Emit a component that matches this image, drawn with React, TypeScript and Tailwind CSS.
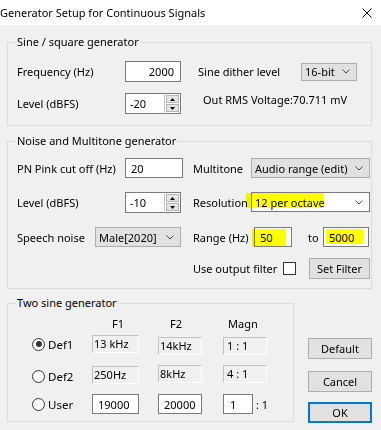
import React from "react";

function Chevron() {
  return (
    <svg width="8" height="5" viewBox="0 0 8 5" className="shrink-0">
      <polyline points="0.5,0.5 4,4 7.5,0.5" fill="none" stroke="#444" strokeWidth="1" />
    </svg>
  );
}

function Legend({ children }: { children: React.ReactNode }) {
  return (
    <span className="absolute left-[8px] top-[-9px] bg-[#f0f0f0] px-[1px] leading-[16px]">
      {children}
    </span>
  );
}

function Edit({ w, h = 21, text, right, pl = 4 }: { w: number; h?: number; text: string; right?: boolean; pl?: number }) {
  return (
    <div
      className={`border border-[#7a7a7a] bg-white flex items-center shrink-0 ${right ? "justify-end pr-[6px]" : ""}`}
      style={{ width: w, height: h, paddingLeft: right ? 0 : pl }}
    >
      {text}
    </div>
  );
}

function Spin({ text }: { text: string }) {
  return (
    <div className="flex h-[21px] shrink-0">
      <div className="w-[39px] border border-[#7a7a7a] border-r-0 bg-white flex items-center pl-[4px]">{text}</div>
      <div className="w-[17px] border border-[#7a7a7a] border-l-[#c8c8c8] bg-white flex flex-col p-[1px] gap-[1px]">
        <div className="flex-1 bg-[#e5e5e5] border border-[#b5b5b5] flex items-center justify-center">
          <svg width="5" height="3" viewBox="0 0 5 3">
            <polygon points="0,3 2.5,0 5,3" fill="#000" />
          </svg>
        </div>
        <div className="flex-1 bg-[#e5e5e5] border border-[#b5b5b5] flex items-center justify-center">
          <svg width="5" height="3" viewBox="0 0 5 3">
            <polygon points="0,0 2.5,3 5,0" fill="#000" />
          </svg>
        </div>
      </div>
    </div>
  );
}

function Combo({ w, h = 20, text, white }: { w: number; h?: number; text: string; white?: boolean }) {
  return (
    <div
      className={`flex items-center justify-between pl-[3px] pr-[6px] shrink-0 border ${
        white ? "bg-white border-[#7a7a7a]" : "bg-[#e1e1e1] border-[#adadad]"
      }`}
      style={{ width: w, height: h }}
    >
      <span>{text}</span>
      <Chevron />
    </div>
  );
}

function Static({ w, text, pl = 1, mt = 0 }: { w: number; text: string; pl?: number; mt?: number }) {
  return (
    <div
      className="h-[18px] bg-[#f0f0f0] border border-[#c2c2c2] border-b-white border-r-white leading-[15px] shrink-0"
      style={{ width: w, paddingLeft: pl, marginTop: mt }}
    >
      {text}
    </div>
  );
}

function Radio({ label, checked }: { label: string; checked?: boolean }) {
  return (
    <div className="flex items-center w-[60px] shrink-0">
      <div className="w-[13px] h-[13px] rounded-full border border-[#333] bg-white flex items-center justify-center">
        {checked && <div className="w-[6px] h-[6px] rounded-full bg-[#333]" />}
      </div>
      <span className="ml-[3px] text-[11.5px]">{label}</span>
    </div>
  );
}

function Button({ children, primary }: { children: React.ReactNode; primary?: boolean }) {
  return (
    <div
      className={`h-[21px] w-[64px] flex items-center justify-center bg-[#e1e1e1] ${
        primary ? "border-2 border-[#0078d7]" : "border border-[#adadad]"
      }`}
    >
      {children}
    </div>
  );
}

export default function App() {
  return (
    <div className="w-[381px] h-[430px] overflow-hidden whitespace-nowrap bg-[#f0f0f0] text-black text-[11px] leading-[15px] font-['Noto_Sans',sans-serif]">
      <div className="h-[25px] bg-white flex items-center justify-between pr-[9px]">
        <span>Generator Setup for Continuous Signals</span>
        <svg width="10" height="10" viewBox="0 0 10 10">
          <path d="M0.5 0.5 L9.5 9.5 M9.5 0.5 L0.5 9.5" stroke="#000" strokeWidth="1" />
        </svg>
      </div>

      <div className="pl-[7px]">
        {/* Sine / square */}
        <div className="relative mt-[17px] w-[365px] h-[84px] border border-[#dcdcdc] pl-[9px] pt-[18px] flex">
          <Legend>Sine / square generator</Legend>
          <div className="w-[164px] flex flex-col">
            <div className="flex items-center h-[21px]">
              <span className="w-[108px]">Frequency (Hz)</span>
              <Edit w={56} text="2000" right />
            </div>
            <div className="flex items-center h-[21px] mt-[11px]">
              <span className="w-[108px]">Level (dBFS)</span>
              <Spin text="-20" />
            </div>
          </div>
          <div className="ml-[17px] flex flex-col">
            <div className="flex items-center h-[19px] mt-[1px]">
              <span className="w-[103px]">Sine dither level</span>
              <Combo w={56} h={18} text="16-bit" />
            </div>
            <div className="ml-[5px] mt-[11px]">Out RMS Voltage:70.711 mV</div>
          </div>
        </div>

        {/* Noise and multitone */}
        <div className="relative mt-[15px] w-[365px] h-[148px] border border-[#dcdcdc] pl-[9px] pt-[16px] flex">
          <Legend>Noise and Multitone generator</Legend>
          <div className="w-[166px] flex flex-col">
            <div className="flex items-center h-[20px]">
              <span className="w-[108px]">PN Pink cut off (Hz)</span>
              <Edit w={58} h={20} text="20" pl={5} />
            </div>
            <div className="flex items-center h-[21px] mt-[14px]">
              <span className="w-[108px]">Level (dBFS)</span>
              <Spin text="-10" />
            </div>
            <div className="flex items-center h-[20px] mt-[14px]">
              <span className="w-[78px]">Speech noise</span>
              <Combo w={86} text="Male[2020]" />
            </div>
          </div>
          <div className="ml-[10px] flex flex-col">
            <div className="flex items-center h-[20px]">
              <span className="w-[58px]">Multitone</span>
              <Combo w={119} text="Audio range (edit)" />
            </div>
            <div className="flex items-center h-[20px] mt-[14px]">
              <span className="w-[58px]">Resolution</span>
              <div className="relative">
                <Combo w={119} text="12 per octave" white />
                <span className="absolute left-[-5px] top-[1px] w-[77px] h-[15px] bg-[#ffff00] mix-blend-multiply" />
              </div>
            </div>
            <div className="flex items-center h-[20px] mt-[15px]">
              <span className="w-[61px]">Range (Hz)</span>
              <div className="relative">
                <Edit w={38} h={20} text="50" pl={5} />
                <span className="absolute left-[-2px] top-[2px] w-[34px] h-[17px] bg-[#ffff00] mix-blend-multiply" />
              </div>
              <span className="ml-[16px] w-[15px]">to</span>
              <div className="relative">
                <Edit w={46} h={20} text="5000" pl={5} />
                <span className="absolute left-[3px] top-[2px] w-[37px] h-[15px] bg-[#ffff00] mix-blend-multiply" />
              </div>
            </div>
            <div className="flex items-center h-[21px] mt-[11px]">
              <span className="w-[90px]">Use output filter</span>
              <div className="w-[13px] h-[13px] border border-[#333] bg-white" />
              <div className="ml-[13px] w-[61px] h-[21px] bg-[#e1e1e1] border border-[#adadad] flex items-center justify-center">
                Set Filter
              </div>
            </div>
          </div>
        </div>

        <div className="flex mt-[14px]">
          {/* Two sine */}
          <div className="relative w-[287px] h-[119px] border border-[#dcdcdc] pl-[24px] pt-[12px] flex flex-col">
            <Legend>Two sine generator</Legend>
            <div className="flex h-[15px]">
              <span className="w-[60px]" />
              <span className="w-[47px] pl-[20px]">F1</span>
              <span className="ml-[19px] w-[44px] pl-[12px]">F2</span>
              <span className="ml-[21px] w-[44px] pl-[5px]">Magn</span>
            </div>
            <div className="flex items-start h-[19px] mt-[4px]">
              <div className="h-[18px] flex items-center"><Radio label="Def1" checked /></div>
              <Static w={47} text="13 kHz" />
              <div className="ml-[19px]"><Static w={44} text="14kHz" pl={1} mt={2} /></div>
              <div className="ml-[21px]"><Static w={44} text="1 : 1" pl={3} mt={2} /></div>
            </div>
            <div className="flex items-start h-[19px] mt-[11px]">
              <div className="h-[22px] flex items-center"><Radio label="Def2" /></div>
              <Static w={47} text="250Hz" mt={1} />
              <div className="ml-[19px]"><Static w={44} text="8kHz" /></div>
              <div className="ml-[21px]"><Static w={44} text="4 : 1" pl={3} /></div>
            </div>
            <div className="flex items-center h-[20px] mt-[10px]">
              <Radio label="User" />
              <Edit w={47} h={20} text="19000" pl={5} />
              <div className="ml-[19px]"><Edit w={44} h={20} text="20000" pl={5} /></div>
              <div className="ml-[21px]"><Edit w={30} h={20} text="1" pl={6} /></div>
              <span className="ml-[3px]">: 1</span>
            </div>
          </div>

          <div className="ml-[14px] pt-[35px] flex flex-col">
            <Button>Default</Button>
            <div className="mt-[12px]"><Button>Cancel</Button></div>
            <div className="mt-[10px]"><Button primary>OK</Button></div>
          </div>
        </div>
      </div>
    </div>
  );
}
